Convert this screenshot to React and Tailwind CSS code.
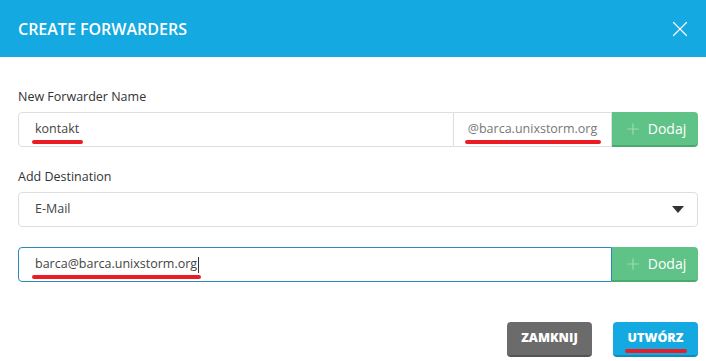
import { Plus, X } from "lucide-react";

function Marked({ children, className = "" }) {
  // red annotation stroke under the text
  return (
    <span className={`relative inline-block ${className}`}>
      {children}
      <span className="absolute left-[-3px] right-[-4px] bottom-[-5px] h-[4px] rounded-full bg-[#ec1c24]" />
    </span>
  );
}

function AddButton() {
  return (
    <button className="flex w-[86px] items-center justify-center gap-1.5 rounded-r-[4px] border-b-2 border-[#4aa96f] bg-[#5fc387] text-[14px] text-white">
      <Plus className="h-[18px] w-[18px] text-[#9fdcb6]" strokeWidth={1.5} />
      Dodaj
    </button>
  );
}

export default function App() {
  return (
    <div className="h-[361px] w-[706px] bg-white font-['Open_Sans',sans-serif] text-[#333]">
      {/* Header */}
      <div className="flex h-[57px] items-center justify-between bg-[#14a9e0] pl-[18px] pr-[13px]">
        <h1 className="text-[16px] font-semibold text-white">CREATE FORWARDERS</h1>
        <X className="h-[26px] w-[26px] text-white" strokeWidth={1.1} />
      </div>

      <div className="pl-[18px] pr-[8px] pt-[31px]">
        <label className="block text-[12.5px] leading-[18px] text-[#333]">New Forwarder Name</label>
        <div className="mt-[6px] flex h-[35px]">
          <div className="flex flex-1 items-center rounded-l-[4px] border border-[#dedede] px-[16px] text-[12.5px] text-[#444]">
            <Marked>kontakt</Marked>
          </div>
          <div className="flex w-[158px] items-center justify-center border-y border-r border-[#dedede] text-[12.5px] text-[#777]">
            <Marked>@barca.unixstorm.org</Marked>
          </div>
          <AddButton />
        </div>

        <label className="mt-[21px] block text-[12.5px] leading-[18px] text-[#333]">Add Destination</label>
        <div className="mt-[6px] flex h-[35px] items-center justify-between rounded-[4px] border border-[#dedede] pl-[16px] pr-[13px] text-[12.5px] text-[#444]">
          <span>E-Mail</span>
          <svg width="12" height="7" viewBox="0 0 12 7">
            <path d="M0 0h12L6 7z" fill="#333" />
          </svg>
        </div>

        <div className="mt-[20px] flex h-[35px]">
          <div className="flex flex-1 items-center rounded-l-[4px] border border-[#2a8ab8] px-[16px] text-[12.5px] text-[#444]">
            <Marked>barca@barca.unixstorm.org</Marked>
            <span className="ml-[1px] h-[16px] w-px bg-[#333]" />
          </div>
          <AddButton />
        </div>

        <div className="mt-[40px] flex justify-end gap-[21px]">
          <button className="h-[35px] w-[85px] rounded-[4px] border-b-2 border-[#555] bg-[#6b6b6b] text-[12.5px] font-extrabold text-white">
            ZAMKNIJ
          </button>
          <button className="h-[35px] w-[85px] rounded-[4px] border-b-2 border-[#0e8cc0] bg-[#14a9e0] text-[12.5px] font-extrabold text-white">
            <Marked>UTWÓRZ</Marked>
          </button>
        </div>
      </div>
    </div>
  );
}
